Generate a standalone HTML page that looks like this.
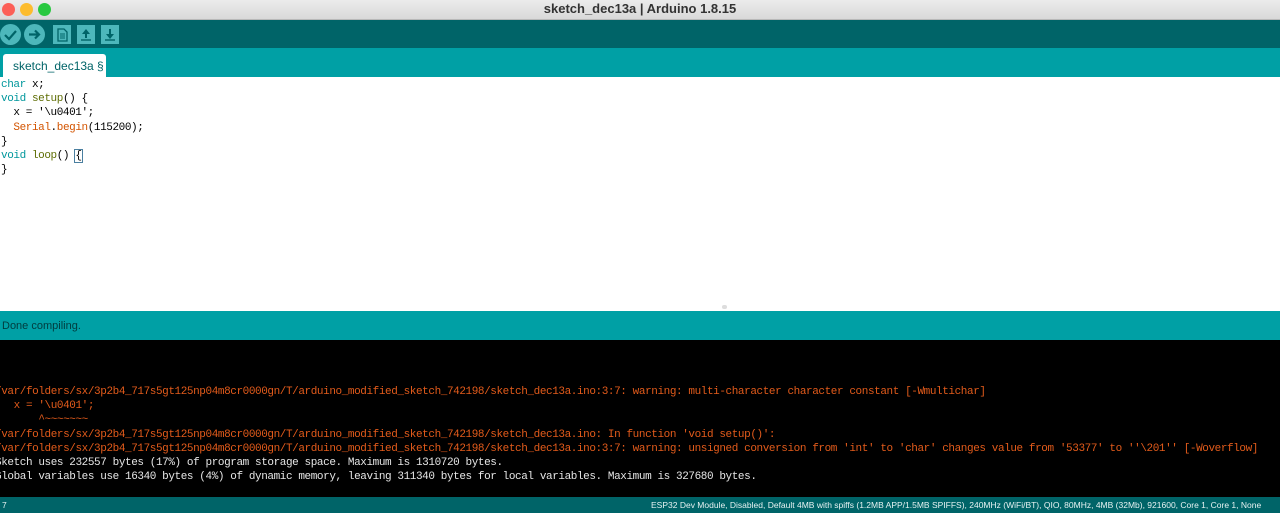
<!DOCTYPE html>
<html><head><meta charset="utf-8"><style>
*{margin:0;padding:0;box-sizing:border-box}
body{width:1280px;height:513px;overflow:hidden;background:#fff;font-family:"Liberation Sans",sans-serif;position:relative}
.title{position:absolute;left:0;top:0;width:1280px;height:20px;background:linear-gradient(#ececec,#d9d9d9);border-bottom:1px solid #b8b8b8;text-align:center;font-size:13px;font-weight:bold;line-height:18px;color:#333}
.dot{position:absolute;top:3px;width:13px;height:13px;border-radius:50%}
.tool{position:absolute;top:20px;left:0;width:1280px;height:28px;background:#006468}
.tabbar{position:absolute;top:48px;left:0;width:1280px;height:29px;background:#00a0a5}
.tab{position:absolute;left:3px;top:6px;width:103px;height:23px;background:#fff;border-radius:3px 3px 0 0;color:#006468;font-size:12px;line-height:25px;padding-left:10px}
pre{font-family:"Liberation Mono",monospace;font-size:11px;letter-spacing:-0.41px;line-height:14.2px}
.code{position:absolute;top:77px;left:1px}
.k{color:#00979c}.f{color:#5e6d03}.o{color:#d35400}
.status{position:absolute;top:311px;left:0;width:1280px;height:29px;background:#00a0a5;color:#003c3e;font-size:11px;line-height:31px;padding-left:2px}
.console{position:absolute;top:340px;left:0;width:1280px;height:157px;background:#000}
.console pre{position:absolute;top:44px;left:-5px;color:#e35b1b}
.w{color:#e6e6e6}
.bottom{position:absolute;top:497px;left:0;width:1280px;height:16px;background:#006468;color:#e6f2f2;font-size:8.5px;line-height:16px}
.btn{position:absolute;top:24px;width:21px;height:21px;border-radius:50%;background:#4db7bb}
.sq{position:absolute;top:25px;width:18px;height:19px;background:#4db7bb}
</style></head><body>
<div class="title">sketch_dec13a | Arduino 1.8.15
<span class="dot" style="left:2px;background:#fc5f57"></span>
<span class="dot" style="left:20px;background:#fdbc2e"></span>
<span class="dot" style="left:38px;background:#29c840"></span></div>
<div class="tool"></div>
<div class="btn" style="left:0"><svg width="21" height="21"><path d="M5 11l4 4 7-8" stroke="#006468" stroke-width="2.2" fill="none"/></svg></div>
<div class="btn" style="left:24px"><svg width="21" height="21"><path d="M5 10.5h10M11 6.5l4 4-4 4" stroke="#006468" stroke-width="2.2" fill="none"/></svg></div>
<div class="sq" style="left:53px"><svg width="18" height="19"><path d="M5 4h6l3 3v9H5z" stroke="#006468" stroke-width="1.3" fill="none"/><path d="M7 9h5M7 11h5M7 13h5" stroke="#006468" stroke-width="1"/></svg></div>
<div class="sq" style="left:77px"><svg width="18" height="19"><path d="M9 4l-4 5h3v4h2V9h3z" fill="#006468"/><path d="M4 15h10" stroke="#006468" stroke-width="1.4"/></svg></div>
<div class="sq" style="left:101px"><svg width="18" height="19"><path d="M8 4h2v5h3l-4 5-4-5h3z" fill="#006468"/><path d="M4 15h10" stroke="#006468" stroke-width="1.4"/></svg></div>
<div class="tabbar"><div class="tab">sketch_dec13a §</div></div>
<pre class="code" style="top:78px"><span class="k">char</span> x;
<span class="k">void</span> <span class="f">setup</span>() {
  x = '\u0401';
  <span class="o">Serial</span>.<span class="o">begin</span>(115200);
}
<span class="k">void</span> <span class="f">loop</span>() <span style="outline:1px solid #4a7fa0">{</span>
}</pre>
<div style="position:absolute;left:722px;top:305px;width:5px;height:4px;background:#ddd;border-radius:2px"></div>
<div class="status">Done compiling.</div>
<div class="console"><pre style="top:45px">/var/folders/sx/3p2b4_717s5gt125np04m8cr0000gn/T/arduino_modified_sketch_742198/sketch_dec13a.ino:3:7: warning: multi-character character constant [-Wmultichar]
   x = '\u0401';
       ^~~~~~~~
/var/folders/sx/3p2b4_717s5gt125np04m8cr0000gn/T/arduino_modified_sketch_742198/sketch_dec13a.ino: In function 'void setup()':
/var/folders/sx/3p2b4_717s5gt125np04m8cr0000gn/T/arduino_modified_sketch_742198/sketch_dec13a.ino:3:7: warning: unsigned conversion from 'int' to 'char' changes value from '53377' to ''\201'' [-Woverflow]
<span class="w">Sketch uses 232557 bytes (17%) of program storage space. Maximum is 1310720 bytes.
Global variables use 16340 bytes (4%) of dynamic memory, leaving 311340 bytes for local variables. Maximum is 327680 bytes.</span></pre></div>
<div class="bottom"><span style="position:absolute;left:2px">7</span><span style="position:absolute;left:651px;white-space:nowrap">ESP32 Dev Module, Disabled, Default 4MB with spiffs (1.2MB APP/1.5MB SPIFFS), 240MHz (WiFi/BT), QIO, 80MHz, 4MB (32Mb), 921600, Core 1, Core 1, None</span></div>
</body></html>
